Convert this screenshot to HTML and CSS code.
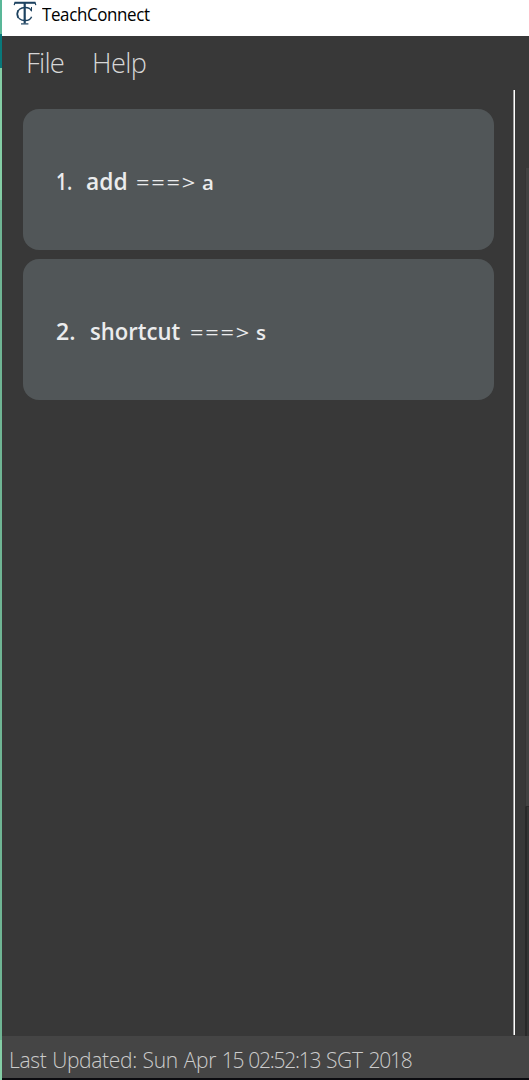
FILE: index.html
```
<!DOCTYPE html>
<html lang="en">
<head>
<meta charset="utf-8">
<title>TeachConnect</title>
<link rel="stylesheet" href="styles.css">
</head>
<body>
<div class="desktop">
  <div class="window">
    <header class="titlebar">
      <svg class="logo" viewBox="0 0 24 25" width="24" height="25" fill="none" stroke="#1d4260">
        <path d="M1.2 5.2L2 2.4H22L22.8 5.2" stroke-width="1.2"/>
        <path d="M2 2.9H22" stroke-width="1.8"/>
        <path d="M11.7 3V23.5" stroke-width="2.2"/>
        <path d="M8 23.9H15.4" stroke-width="1.2"/>
        <path d="M18.3 10.8C17.6 8.6 15.4 7.5 12.2 7.5C7.4 7.5 4.4 10.2 4.4 14C4.4 17.8 7.4 20.5 12.2 20.5C15.4 20.5 17.7 19.2 18.6 16.7" stroke-width="1.4"/>
        <path d="M18.5 7V11.4" stroke-width="1"/>
        <path d="M5.1 10.2C4 12.5 4 15.7 5.2 18" stroke-width="1.5"/>
      </svg>
      <span class="app-name">TeachConnect</span>
    </header>
    <nav class="menu"><span class="menu-file">File</span><span class="menu-help">Help</span></nav>
    <main class="content">
      <section class="list">
        <article class="card"><span class="index index-one">1.</span><span class="command command-add">add</span><span class="arrow"><span class="arrow-text">===&gt;</span></span><span class="alias">a</span></article>
        <article class="card"><span class="index index-two">2.</span><span class="command command-shortcut">shortcut</span><span class="arrow"><span class="arrow-text">===&gt;</span></span><span class="alias">s</span></article>
      </section>
      <div class="divider"></div>
      <aside class="panel"><div class="panel-top"></div><div class="panel-middle"></div><div class="panel-bottom"></div></aside>
    </main>
    <footer class="status"><span class="updated">Last Updated: Sun Apr <span class="digits">15 02:52:13</span> SGT <span class="digits">2018</span></span></footer>
  </div>
</div>
</body>
</html>
```
FILE: styles.css
```
* { box-sizing: border-box; }
body { margin: 0; font-family: "Open Sans", "Noto Sans", sans-serif; }
.desktop {
  width: 529px; height: 1080px; padding-left: 2px; overflow: hidden;
  background: linear-gradient(#59b798 0 34px, #08787a 34px 68px, #84cea5 68px 200px, #6fb594 200px 1040px, #84cea5 1040px);
}
.window { display: flex; flex-direction: column; height: 100%; background: #383838; border-bottom: 2px solid #0b0b0f; }
.titlebar { height: 36px; background: #fff; display: flex; align-items: flex-start; padding-left: 11px; color: #000; }
.logo { flex: none; }
.app-name { margin: 2px 0 0 5px; font-size: 18px; line-height: 25px; letter-spacing: -0.4px; transform: scaleX(0.942); transform-origin: left; }
.menu { height: 54px; display: flex; color: #d6d6d6; font-size: 27.5px; font-weight: 300; line-height: 53px; padding-left: 24px; white-space: nowrap; }
.menu-file { width: 66px; letter-spacing: -0.8px; }
.menu-help { letter-spacing: -0.6px; transform: scaleX(0.985); transform-origin: left; }
.content { height: 946px; display: flex; }
.list { width: 511px; padding: 19.4px 19px 0 21px; display: flex; flex-direction: column; gap: 9px; }
.card {
  height: 141px; border-radius: 16px; background: #515658; color: #ebeced;
  display: flex; align-items: baseline; padding: 54.2px 0 0 33px; white-space: pre;
}
.index, .command { font-size: 24px; line-height: 34px; font-weight: 600; transform-origin: left; }
.index-one { width: 30px; transform: scaleX(0.8); }
.index-two { width: 34px; transform: scaleX(0.96); }
.command-add { width: 50px; transform: scaleX(0.95); }
.command-shortcut { width: 100px; transform: scaleX(0.92); }
.arrow { width: 66px; font-size: 20px; letter-spacing: 1.5px; font-weight: 400; }
.arrow-text { display: inline-block; transform: scaleX(1.18); transform-origin: left; }
.alias { font-size: 20.5px; font-weight: 600; }
.divider { width: 2px; height: 945px; background: linear-gradient(90deg, #a0a0a0 50%, #fff 50%); }
.panel { width: 14px; padding-left: 10px; }
.panel-top { height: 78px; }
.panel-middle { height: 639px; background: #424242; border-left: 1px solid #353535; border-bottom: 1px solid #292929; }
.panel-bottom { height: 229px; background: #353535; border-left: 2px solid #292929; }
.status { height: 42px; background: #454545; color: #ccc; padding-left: 7px; font-size: 22px; line-height: 47px; font-weight: 300; white-space: nowrap; }
.updated { display: inline-block; letter-spacing: -0.35px; word-spacing: 0.7px; transform: scaleX(0.955); transform-origin: left; }
.digits { letter-spacing: -1.3px; }
```
